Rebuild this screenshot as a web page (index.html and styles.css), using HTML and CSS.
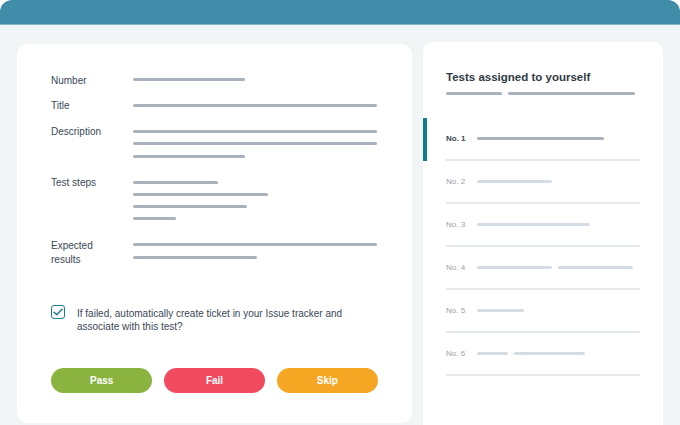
FILE: index.html
```html
<!DOCTYPE html>
<html lang="en">
<head>
    <meta charset="UTF-8">
    <title>Test run</title>
    <link rel="stylesheet" href="styles.css">
</head>
<body>

<div class="window">
    <div class="window-bar"></div>

    <div class="window-body">
        <!-- Test case details -->
        <div class="card card-test">
            <div class="fields">
                <div class="field">
                    <div class="label">Number</div>
                    <div class="bars"><span class="bar" style="width:112px"></span></div>
                </div>
                <div class="field">
                    <div class="label">Title</div>
                    <div class="bars"><span class="bar" style="width:244px"></span></div>
                </div>
                <div class="field">
                    <div class="label">Description</div>
                    <div class="bars">
                        <span class="bar" style="width:244px"></span>
                        <span class="bar" style="width:244px"></span>
                        <span class="bar" style="width:112px"></span>
                    </div>
                </div>
                <div class="field">
                    <div class="label">Test steps</div>
                    <div class="bars">
                        <span class="bar" style="width:85px"></span>
                        <span class="bar" style="width:135px"></span>
                        <span class="bar" style="width:114px"></span>
                        <span class="bar" style="width:43px"></span>
                    </div>
                </div>
                <div class="field">
                    <div class="label label-multi">Expected<br>results</div>
                    <div class="bars">
                        <span class="bar" style="width:244px"></span>
                        <span class="bar" style="width:124px"></span>
                    </div>
                </div>
            </div>

            <label class="check-row">
                <span class="check-box">
                    <svg width="10" height="8" viewBox="0 0 10 8"><path d="M1 4.2 L3.8 6.8 L9 1.2" fill="none" stroke="#1e7d90" stroke-width="1.5" stroke-linecap="round" stroke-linejoin="round"/></svg>
                </span>
                <span class="check-text">If failed, automatically create ticket in your Issue tracker and associate with this test?</span>
            </label>

            <div class="actions">
                <button class="btn btn-pass">Pass</button>
                <button class="btn btn-fail">Fail</button>
                <button class="btn btn-skip">Skip</button>
            </div>
        </div>

        <!-- Assigned tests -->
        <div class="card card-list">
            <h3 class="list-title">Tests assigned to yourself</h3>
            <div class="title-bars">
                <span class="bar" style="width:56px"></span>
                <span class="bar" style="width:127px"></span>
            </div>

            <div class="test-list">
                <div class="test-row active">
                    <span class="test-no">No. 1</span>
                    <span class="bar" style="width:127px"></span>
                </div>
                <div class="test-row">
                    <span class="test-no">No. 2</span>
                    <span class="bar" style="width:75px"></span>
                </div>
                <div class="test-row">
                    <span class="test-no">No. 3</span>
                    <span class="bar" style="width:113px"></span>
                </div>
                <div class="test-row">
                    <span class="test-no">No. 4</span>
                    <span class="bar" style="width:75px"></span>
                    <span class="bar" style="width:75px"></span>
                </div>
                <div class="test-row">
                    <span class="test-no">No. 5</span>
                    <span class="bar" style="width:47px"></span>
                </div>
                <div class="test-row">
                    <span class="test-no">No. 6</span>
                    <span class="bar" style="width:31px"></span>
                    <span class="bar" style="width:71px"></span>
                </div>
            </div>
        </div>
    </div>
</div>

</body>
</html>
```

FILE: styles.css
```css
body { margin: 0; background: #fff; font-family: "Liberation Sans", Arial, sans-serif; color: #3a4856; }

/* Fenetre */
.window { width: 680px; height: 425px; overflow: hidden; }
.window-bar { height: 24px; background: #418ca8; border-radius: 12px 12px 0 0; border-bottom: 1px solid #86b6c8; }
.window-body { height: 400px; background: #f1f5f6; display: flex; align-items: flex-start; gap: 11px; padding-left: 17px; }

.card { background: #fff; border-radius: 10px; box-sizing: border-box; }
.bar { display: inline-block; height: 3px; border-radius: 2px; background: #a8b3bd; vertical-align: middle; }

/* Carte de gauche */
.card-test { width: 395px; height: 379px; margin-top: 19px; padding: 29.5px 34px 0; }
.field { display: flex; margin-bottom: 13.7px; }
.field:last-child { margin-bottom: 0; }
.label { width: 82px; flex-shrink: 0; font-size: 10px; line-height: 12.3px; padding-top: 1px; margin-bottom: -1px; }
.label-multi { line-height: 13.6px; margin-top: -0.65px; }
.bars { display: flex; flex-direction: column; }
.bars .bar { margin: 4.65px 0; }

.check-row { display: flex; align-items: flex-start; margin-top: 40px; }
.check-box { width: 14px; height: 14px; box-sizing: border-box; border: 1.5px solid #1e7d90; border-radius: 3px; display: flex; align-items: center; justify-content: center; flex-shrink: 0; }
.check-text { margin-left: 12px; font-size: 10px; line-height: 13.4px; margin-top: 1.5px; width: 280px; }

.actions { display: flex; gap: 11.5px; margin-top: 34px; }
.btn { width: 101.5px; height: 25.5px; border: none; border-radius: 13px; color: #fff; font-family: inherit; font-weight: bold; font-size: 10px; padding: 0; }
.btn-pass { background: #8bb33f; }
.btn-fail { background: #f24b5f; }
.btn-skip { background: #f5a724; }

/* Carte de droite */
.card-list { width: 240px; height: 420px; margin-top: 17px; padding: 27px 23px 0; }
.list-title { margin: 0; font-size: 11.5px; line-height: 16px; font-weight: bold; color: #2f3a44; }
.title-bars { display: flex; gap: 6px; margin-top: 7px; }
.title-bars .bar { background: #a8b3bd; }

.test-list { margin-top: 23px; width: 194px; }
.test-row { position: relative; display: flex; align-items: center; height: 41px; border-bottom: 2px solid #e4e9ed; }
.test-row .bar { background: #d5dce3; margin-right: 6px; }
.test-no { width: 31px; font-size: 8px; color: #9aa1a7; }
.test-row.active .test-no { color: #3a4550; font-weight: bold; }
.test-row.active .bar { background: #a8b3bd; }
.test-row.active::before { content: ""; position: absolute; left: -23px; top: 0; bottom: -2px; width: 4px; background: #0f7c8c; }
```
